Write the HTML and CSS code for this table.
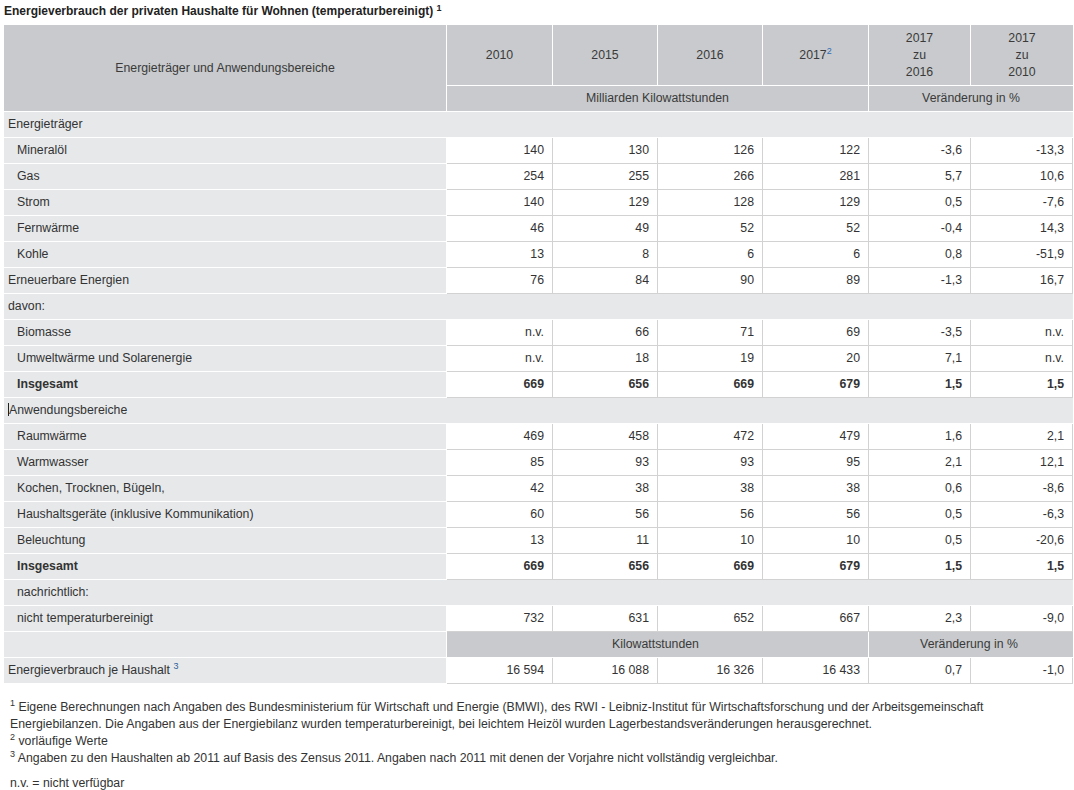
FILE: index.html
```html
<!DOCTYPE html>
<html lang="de">
<head>
<meta charset="utf-8">
<title>Energieverbrauch der privaten Haushalte</title>
<link rel="stylesheet" href="styles.css">
</head>
<body>
<h1 class="title">Energieverbrauch der privaten Haushalte für Wohnen (temperaturbereinigt) <sup>1</sup></h1>
<table class="tbl">
  <colgroup>
    <col class="c-label"><col class="c-a"><col class="c-b"><col class="c-b"><col class="c-a"><col class="c-c"><col class="c-d">
  </colgroup>
  <thead>
    <tr class="h1">
      <th rowspan="2" class="hl">Energieträger und Anwendungsbereiche</th>
      <th>2010</th><th>2015</th><th>2016</th><th>2017<sup class="note">2</sup></th>
      <th>2017<br>zu<br>2016</th><th>2017<br>zu<br>2010</th>
    </tr>
    <tr class="h2">
      <th colspan="4">Milliarden Kilowattstunden</th>
      <th colspan="2">Veränderung in %</th>
    </tr>
  </thead>
  <tbody>
    <tr class="sec"><td colspan="7">Energieträger</td></tr>
    <tr><th class="in">Mineralöl</th><td>140</td><td>130</td><td>126</td><td>122</td><td>-3,6</td><td>-13,3</td></tr>
    <tr><th class="in">Gas</th><td>254</td><td>255</td><td>266</td><td>281</td><td>5,7</td><td>10,6</td></tr>
    <tr><th class="in">Strom</th><td>140</td><td>129</td><td>128</td><td>129</td><td>0,5</td><td>-7,6</td></tr>
    <tr><th class="in">Fernwärme</th><td>46</td><td>49</td><td>52</td><td>52</td><td>-0,4</td><td>14,3</td></tr>
    <tr><th class="in">Kohle</th><td>13</td><td>8</td><td>6</td><td>6</td><td>0,8</td><td>-51,9</td></tr>
    <tr><th>Erneuerbare Energien</th><td>76</td><td>84</td><td>90</td><td>89</td><td>-1,3</td><td>16,7</td></tr>
    <tr class="sec"><td colspan="7">davon:</td></tr>
    <tr><th class="in">Biomasse</th><td>n.v.</td><td>66</td><td>71</td><td>69</td><td>-3,5</td><td>n.v.</td></tr>
    <tr><th class="in">Umweltwärme und Solarenergie</th><td>n.v.</td><td>18</td><td>19</td><td>20</td><td>7,1</td><td>n.v.</td></tr>
    <tr class="total"><th class="in">Insgesamt</th><td>669</td><td>656</td><td>669</td><td>679</td><td>1,5</td><td>1,5</td></tr>
    <tr class="sec"><td colspan="7"><span class="caret"></span>Anwendungsbereiche</td></tr>
    <tr><th class="in">Raumwärme</th><td>469</td><td>458</td><td>472</td><td>479</td><td>1,6</td><td>2,1</td></tr>
    <tr><th class="in">Warmwasser</th><td>85</td><td>93</td><td>93</td><td>95</td><td>2,1</td><td>12,1</td></tr>
    <tr><th class="in">Kochen, Trocknen, Bügeln,</th><td>42</td><td>38</td><td>38</td><td>38</td><td>0,6</td><td>-8,6</td></tr>
    <tr><th class="in">Haushaltsgeräte (inklusive Kommunikation)</th><td>60</td><td>56</td><td>56</td><td>56</td><td>0,5</td><td>-6,3</td></tr>
    <tr><th class="in">Beleuchtung</th><td>13</td><td>11</td><td>10</td><td>10</td><td>0,5</td><td>-20,6</td></tr>
    <tr class="total"><th class="in">Insgesamt</th><td>669</td><td>656</td><td>669</td><td>679</td><td>1,5</td><td>1,5</td></tr>
    <tr class="sec"><td colspan="7" class="in">nachrichtlich:</td></tr>
    <tr><th class="in">nicht temperaturbereinigt</th><td>732</td><td>631</td><td>652</td><td>667</td><td>2,3</td><td>-9,0</td></tr>
    <tr class="units"><th></th><td colspan="4">Kilowattstunden</td><td colspan="2">Veränderung in %</td></tr>
    <tr class="last"><th>Energieverbrauch je Haushalt <sup class="note">3</sup></th><td>16 594</td><td>16 088</td><td>16 326</td><td>16 433</td><td>0,7</td><td>-1,0</td></tr>
  </tbody>
</table>
<div class="notes">
  <p><sup>1</sup> Eigene Berechnungen nach Angaben des Bundesministerium für Wirtschaft und Energie (BMWI), des RWI - Leibniz-Institut für Wirtschaftsforschung und der Arbeitsgemeinschaft<br>Energiebilanzen. Die Angaben aus der Energiebilanz wurden temperaturbereinigt, bei leichtem Heizöl wurden Lagerbestandsveränderungen herausgerechnet.</p>
  <p><sup>2</sup> vorläufige Werte</p>
  <p><sup>3</sup> Angaben zu den Haushalten ab 2011 auf Basis des Zensus 2011. Angaben nach 2011 mit denen der Vorjahre nicht vollständig vergleichbar.</p>
  <p class="nv">n.v. = nicht verfügbar</p>
</div>
</body>
</html>
```

FILE: styles.css
```css
html, body {
  background: #ffffff;
}
body {
  margin: 0;
  padding: 2px 4px 0 4px;
  font-family: "Liberation Sans", Arial, sans-serif;
  font-size: 12.3px;
  color: #333333;
}
.title {
  margin: 0 0 5px 0;
  font-size: 12px;
  font-weight: bold;
  line-height: 18px;
  color: #222222;
}
.title sup {
  font-size: 9px;
  vertical-align: top;
  position: relative;
  top: -3px;
}
.tbl {
  border-collapse: separate;
  border-spacing: 0;
  table-layout: fixed;
  width: 1069px;
}
.c-label { width: 443px; }
.c-a { width: 106px; }
.c-b { width: 105px; }
.c-c { width: 102px; }
.c-d { width: 102px; }

.tbl th, .tbl td {
  padding: 0 8px 0 4px;
  height: 25px;
  box-sizing: border-box;
  font-size: 12.3px;
  font-weight: normal;
  line-height: 15px;
  vertical-align: middle;
  white-space: nowrap;
}
.tbl thead th {
  background: #c8cacd;
  color: #3a3a3a;
  text-align: center;
  border-right: 1px solid #ffffff;
  border-bottom: 1px solid #ffffff;
  padding: 0 4px;
}
.tbl thead .h1 th {
  height: 61px;
  line-height: 17px;
}
.tbl thead .h2 th {
  height: 26px;
}
.tbl thead th:last-child { border-right: none; }
.tbl thead .hl { border-right: 1px solid #ffffff; }

.tbl tbody th {
  background: #e6e8ea;
  text-align: left;
  color: #333333;
  border-right: 1px solid #ffffff;
  border-bottom: 1px solid #ffffff;
  height: 26px;
}
.tbl tbody td {
  background: #ffffff;
  text-align: right;
  border-right: 1px solid #d2d2d2;
  border-bottom: 1px solid #d2d2d2;
  height: 26px;
}
.tbl tbody .in { padding-left: 13px; }
.tbl tbody .sec td {
  background: #e6e8ea;
  text-align: left;
  border-right: none;
  border-bottom: 1px solid #ffffff;
}
.tbl tbody .total th,
.tbl tbody .total td {
  font-weight: bold;
}
.tbl tbody .units td {
  background: #c8cacd;
  text-align: center;
  color: #3a3a3a;
  border-right: 1px solid #ffffff;
  border-bottom: 1px solid #ffffff;
}
.tbl tbody .units td:last-child { border-right: none; }
.tbl tbody .last th { border-bottom: 1px solid #ffffff; }

.caret {
  display: inline-block;
  width: 1px;
  height: 13px;
  background: #222222;
  vertical-align: -2px;
}
.tbl sup.note {
  font-size: 9px;
  line-height: 0;
  vertical-align: 5px;
}
.tbl thead sup.note { color: #2f6db5; }
.tbl tbody sup.note { color: #2f5f9a; }

.notes {
  padding: 15px 0 0 6px;
  color: #333333;
}
.notes p {
  margin: 0;
  line-height: 17px;
}
.notes sup {
  font-size: 9px;
  line-height: 0;
  vertical-align: 5px;
}
.notes .nv {
  margin-top: 8px;
}
```
